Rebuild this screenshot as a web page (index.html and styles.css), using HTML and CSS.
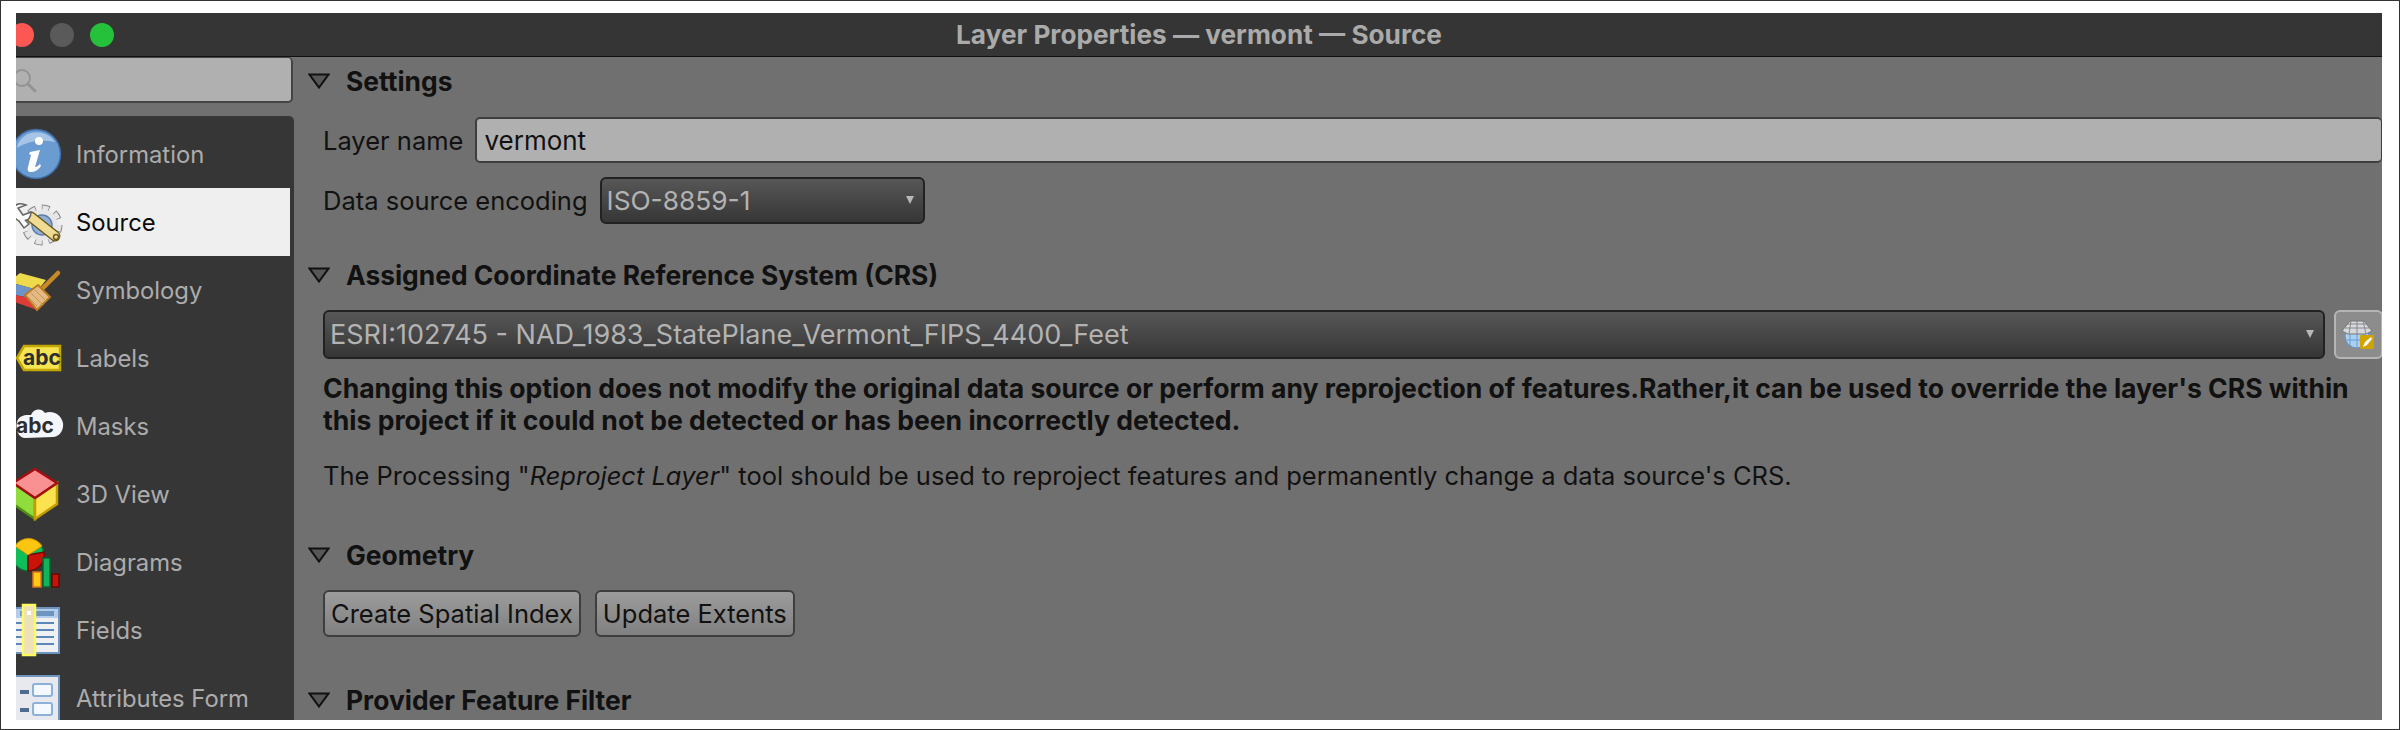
FILE: index.html
```html
<!DOCTYPE html>
<html lang="en">
<head>
    <meta charset="UTF-8">
    <title>Layer Properties — vermont — Source</title>
    <link rel="stylesheet" href="styles.css">
</head>
<body>
    <div class="window">
        <div class="titlebar">
            <div class="lights">
                <span class="light red"></span>
                <span class="light grey"></span>
                <span class="light green"></span>
            </div>
            <div class="title">Layer Properties — vermont — Source</div>
        </div>
        <div class="content">
            <div class="sidebar">
                <div class="search">
                    <svg class="search-icon" width="24" height="28" viewBox="0 0 24 28">
                        <circle cx="9" cy="12" r="8" fill="none" stroke="#939393" stroke-width="2"/>
                        <path d="M15 18l7 7" stroke="#939393" stroke-width="3" stroke-linecap="round"/>
                    </svg>
                </div>
                <div class="list">
                    <div class="item">
                        <svg class="icon" viewBox="0 0 56 52">
                            <circle cx="27" cy="26" r="24.500" fill="#6a9bd1" stroke="#3f6da8" stroke-width="1.500"/>
                            <path d="M8 20a20 17 0 0 1 38 -6a40 30 0 0 0 -38 6z" fill="#a5c4e6"/>
                            <circle cx="30" cy="13" r="4" fill="#fff"/>
                            <path d="M21 24l10-2-5 17c2 0 3-1 5-3l1 2c-3 4-6 6-10 6-3 0-4-2-3-5l3-12-2-1z" fill="#fff"/>
                        </svg>
                        <span>Information</span>
                    </div>
                    <div class="item active">
                        <svg class="icon" viewBox="0 0 56 52">
                            <circle cx="33" cy="29" r="17" fill="none" stroke="#888" stroke-width="7" stroke-dasharray="7.500 5.850" stroke-dashoffset="0.750"/>
                            <circle cx="33" cy="29" r="17" fill="none" stroke="#e6e6e6" stroke-width="5" stroke-dasharray="6 7.350"/>
                            <circle cx="33" cy="29" r="15.500" fill="#e6e6e6"/>
                            <circle cx="33" cy="29" r="10" fill="#8fb1d9" stroke="#5f7fa8" stroke-width="1.500"/>
                            <path d="M22 21l24 19" stroke="#6b5a20" stroke-width="11" stroke-linecap="round"/>
                            <path d="M22 21l24 19" stroke="#efdc92" stroke-width="8" stroke-linecap="round"/>
                            <circle cx="47" cy="41" r="2.500" fill="none" stroke="#6b5a20" stroke-width="1.500"/>
                            <path d="M5 12c2-5 7-5 12-3l-8 3 5 7 8-3c0 5-3 9-6 8l4 4-5 4-5-7c-5-3-7-8-5-13z" fill="#fafafa" stroke="#666" stroke-width="1.500"/>
                        </svg>
                        <span>Source</span>
                    </div>
                    <div class="item">
                        <svg class="icon" viewBox="0 0 56 52">
                            <path d="M0 18l11-9 26 7-8 10z" fill="#eedb4c"/>
                            <path d="M0 18l29 8-7 8-22-4z" fill="#6d94c9"/>
                            <path d="M0 30l22 4 6 12-28-10z" fill="#dd3b35"/>
                            <path d="M49 9l-20 20" stroke="#c98a2a" stroke-width="4.500" stroke-linecap="round"/>
                            <path d="M29 21l12 12-13 13-12-15z" fill="#e3bb82" stroke="#b97a23" stroke-width="2"/>
                            <path d="M22 29l12 12M26 26l11 11M19 33l9 9" stroke="#c6955b" stroke-width="1"/>
                        </svg>
                        <span>Symbology</span>
                    </div>
                    <div class="item">
                        <svg class="icon" viewBox="0 0 56 52">
                            <path d="M15 14h36v24h-36l-7-12z" fill="#f6e552" stroke="#c4a700" stroke-width="2.500"/>
                            <text class="icon-text" x="14" y="33">abc</text>
                        </svg>
                        <span>Labels</span>
                    </div>
                    <div class="item">
                        <svg class="icon" viewBox="0 0 56 52">
                            <path d="M8 22c2-7 8-7 14-7 2-6 10-8 14-2 6-3 16 0 18 10 1 8-4 14-10 14l-28 1c-6 0-10-8-8-16z" fill="#f4f6fc"/>
                            <text class="icon-text" x="7" y="33">abc</text>
                        </svg>
                        <span>Masks</span>
                    </div>
                    <div class="item">
                        <svg class="icon" viewBox="0 0 56 52">
                            <path d="M4 15l22 15v21l-22-15z" fill="#8fdc3c" stroke="#4d8f10" stroke-width="2.500"/>
                            <path d="M48 15l-22 15v21l22-15z" fill="#fde24f" stroke="#c49b00" stroke-width="2.500"/>
                            <path d="M26 1l22 14-22 15-22-15z" fill="#f99092" stroke="#a30f10" stroke-width="2.500"/>
                        </svg>
                        <span>3D View</span>
                    </div>
                    <div class="item">
                        <svg class="icon" viewBox="0 0 56 52">
                            <circle cx="19" cy="19" r="16" fill="#0fbd59" stroke="#0b6b34" stroke-width="1.500"/>
                            <path d="M19 19l16-3a16 16 0 0 1-16 19z" fill="#c91308" stroke="#6d0a05" stroke-width="1.500"/>
                            <path d="M19 19l-13-9a16 16 0 0 1 27 0z" fill="#fbc511" stroke="#e89100" stroke-width="1"/>
                            <rect x="24" y="36" width="8" height="15" fill="#fdc915" stroke="#e0701d" stroke-width="1.500"/>
                            <rect x="34" y="22" width="7" height="29" fill="#11b35b" stroke="#0b5f31" stroke-width="1.500"/>
                            <rect x="43" y="38" width="7" height="13" fill="#c91308" stroke="#660905" stroke-width="1.500"/>
                        </svg>
                        <span>Diagrams</span>
                    </div>
                    <div class="item">
                        <svg class="icon" viewBox="0 0 56 52">
                            <rect x="0" y="4" width="50" height="45" fill="#eef0f4" stroke="#6e94c0" stroke-width="2"/>
                            <rect x="1" y="5" width="48" height="9" fill="#b4cdea"/>
                            <rect x="11" y="7" width="34" height="5" fill="#6e94c0"/>
                            <path d="M27 19h18M27 26h18M27 33h18M27 40h18M0 19h13M0 26h13M0 33h13M0 40h13" stroke="#5b86ba" stroke-width="2"/>
                            <rect x="14" y="1" width="12" height="50" fill="#ece1b8" stroke="#fdfb62" stroke-width="2.500"/>
                            <rect x="18" y="7" width="4" height="4" fill="#fff"/>
                        </svg>
                        <span>Fields</span>
                    </div>
                    <div class="item">
                        <svg class="icon" viewBox="0 0 56 52">
                            <rect x="0" y="4" width="50" height="52" fill="#e7e9ee" stroke="#6e94c0" stroke-width="2"/>
                            <rect x="11" y="18" width="9" height="4" fill="#4f6d90"/>
                            <rect x="11" y="36" width="9" height="4" fill="#4f6d90"/>
                            <rect x="24" y="12" width="19" height="12" rx="2" fill="#f4f9ff" stroke="#8cb0d8" stroke-width="2"/>
                            <rect x="24" y="31" width="19" height="12" rx="2" fill="#f4f9ff" stroke="#8cb0d8" stroke-width="2"/>
                        </svg>
                        <span>Attributes Form</span>
                    </div>
                </div>
            </div>

            <div class="main">
                <div class="section-head">
                    <svg class="arrow" viewBox="0 0 22 16"><path d="M1.500 1.500h19l-9.500 13z" fill="#575757" stroke="#111" stroke-width="2"/></svg>
                    Settings
                </div>
                <div class="form-row name-row">
                    <label>Layer name</label>
                    <div class="text-input">vermont</div>
                </div>
                <div class="form-row encoding-row">
                    <label>Data source encoding</label>
                    <div class="combo encoding">ISO-8859-1<span class="combo-arrow"></span></div>
                </div>

                <div class="section-head crs-head">
                    <svg class="arrow" viewBox="0 0 22 16"><path d="M1.500 1.500h19l-9.500 13z" fill="#575757" stroke="#111" stroke-width="2"/></svg>
                    Assigned Coordinate Reference System (CRS)
                </div>
                <div class="crs-row">
                    <div class="combo crs">ESRI:102745 - NAD_1983_StatePlane_Vermont_FIPS_4400_Feet<span class="combo-arrow"></span></div>
                    <div class="crs-button">
                        <svg width="34" height="30" viewBox="0 0 34 30">
                            <circle cx="15" cy="16" r="12" fill="#a9d0f2" stroke="#5e92c8" stroke-width="1"/>
                            <path d="M3 20h24M15 4v24M8 6v20M22 6v20" stroke="#5e92c8" stroke-width="0.800" fill="none"/>
                            <path d="M0 11l8-10h14l8 10-6 3h-18z" fill="#d5d9de" stroke="#777" stroke-width="1"/>
                            <path d="M9 1l-2 13M21 1l3 13M15 1v13M3 8h24M6 4h18" stroke="#777" stroke-width="0.800"/>
                            <rect x="18" y="15" width="14" height="14" rx="1" fill="#cfa400"/>
                            <path d="M21 27l2-5 6-5 1 2-5 6z" fill="#fff"/>
                        </svg>
                    </div>
                </div>
                <p class="warning">Changing this option does not modify the original data source or perform any reprojection of features.Rather,it can be used to override the layer's CRS within this project if it could not be detected or has been incorrectly detected.</p>
                <p class="note">The Processing "<em>Reproject Layer</em>" tool should be used to reproject features and permanently change a data source's CRS.</p>

                <div class="section-head geometry-head">
                    <svg class="arrow" viewBox="0 0 22 16"><path d="M1.500 1.500h19l-9.500 13z" fill="#575757" stroke="#111" stroke-width="2"/></svg>
                    Geometry
                </div>
                <div class="buttons">
                    <button>Create Spatial Index</button>
                    <button>Update Extents</button>
                </div>

                <div class="section-head filter-head">
                    <svg class="arrow" viewBox="0 0 22 16"><path d="M1.500 1.500h19l-9.500 13z" fill="#575757" stroke="#111" stroke-width="2"/></svg>
                    Provider Feature Filter
                </div>
            </div>
        </div>
    </div>
</body>
</html>
```

FILE: styles.css
```css
* {
    box-sizing: border-box;
}

html, body {
    height: 100%;
}

body {
    margin: 0;
    padding: 12px 17px 9px 15px;
    background-color: #fff;
    border: 1px solid #333;
    font-family: Inter, "Noto Sans", sans-serif;
    font-size: 25.500px;
    color: #111;
    overflow: hidden;
}

.window {
    height: 100%;
    display: flex;
    flex-direction: column;
    overflow: hidden;
    background-color: #707070;
}

.titlebar {
    height: 44px;
    flex-shrink: 0;
    display: grid;
    grid-template-columns: 1fr auto 1fr;
    align-items: center;
    background-color: #353535;
    border-bottom: 1px solid #111;
}

.lights {
    display: flex;
    gap: 16px;
    margin-left: -6px;
}

.light {
    width: 24px;
    height: 24px;
    border-radius: 50%;
}

.red { background-color: #fc5753; }
.grey { background-color: #5a5a5a; }
.green { background-color: #26c13b; }

.title {
    font-size: 26.200px;
    font-weight: 700;
    color: #aaa;
}

.content {
    flex: 1;
    display: flex;
    min-height: 0;
}

.sidebar {
    width: 278px;
    flex-shrink: 0;
    display: flex;
    flex-direction: column;
}

.search {
    height: 46px;
    width: 277px;
    margin-bottom: 13px;
    flex-shrink: 0;
    display: flex;
    align-items: center;
    background-color: #b0b0b0;
    border: solid #444;
    border-width: 1px 2px 2px 0;
    border-radius: 0 5px 5px 0;
}

.search-icon {
    margin-left: -3px;
}

.list {
    flex: 1;
    padding: 4px 4px 0 0;
    background-color: #363636;
    border-radius: 0 5px 0 0;
    overflow: hidden;
}

.item {
    height: 68px;
    flex-shrink: 0;
    display: flex;
    align-items: center;
    overflow: hidden;
    font-size: 23.800px;
    color: #acacac;
}

.item.active {
    background-color: #efefef;
    color: #0c0c0c;
}

.icon {
    width: 56px;
    height: 52px;
    margin-left: -7px;
    margin-right: 11px;
    flex-shrink: 0;
    overflow: visible;
}

.icon-text {
    font-family: Inter, sans-serif;
    font-size: 21px;
    font-weight: 700;
    fill: #2e2e2e;
}

.main {
    flex: 1;
    min-width: 0;
    overflow: hidden;
    padding: 5px 0 0 14px;
}

.section-head {
    display: flex;
    align-items: center;
    height: 38px;
    font-size: 26.400px;
    font-weight: 700;
    color: #111;
}

.arrow {
    width: 22px;
    height: 16px;
    margin-right: 16px;
    flex-shrink: 0;
}

.form-row {
    display: flex;
    align-items: center;
    margin-left: 15px;
}

.form-row label {
    margin-right: 12px;
}

.name-row {
    height: 46px;
    margin-top: 17px;
}

.encoding-row {
    height: 47px;
    margin-top: 14px;
}

.text-input {
    flex: 1;
    height: 46px;
    display: flex;
    align-items: center;
    padding-left: 7px;
    background-color: #b0b0b0;
    border: 2px solid #3e3e3e;
    border-right-width: 1px;
    border-radius: 5px;
    font-size: 26px;
}

.combo {
    position: relative;
    display: flex;
    align-items: center;
    padding-left: 5px;
    background: linear-gradient(#575757, #363636);
    border: 2px solid #222;
    border-radius: 6px;
    color: #b3b3b3;
}

.encoding {
    width: 325px;
    height: 47px;
    font-size: 26.300px;
}

.combo-arrow {
    position: absolute;
    right: 9px;
    top: 50%;
    margin-top: -5px;
    width: 0;
    height: 0;
    border-left: 4px solid transparent;
    border-right: 4px solid transparent;
    border-top: 8px solid #b8b8b8;
}

.crs-head {
    margin-top: 32px;
}

.crs-row {
    display: flex;
    gap: 9px;
    margin-top: 16px;
    margin-left: 15px;
}

.crs {
    flex: 1;
    height: 49px;
    font-size: 27px;
}

.crs-button {
    width: 49px;
    height: 49px;
    margin-right: -1px;
    display: flex;
    align-items: center;
    justify-content: center;
    background-color: #8c8c8c;
    border: 2px solid #b5b5b5;
    border-radius: 6px;
}

.warning {
    margin: 13px 0 0 15px;
    font-size: 26.550px;
    font-weight: 700;
    line-height: 32px;
}

.note {
    margin: 24px 0 0 15px;
    line-height: 32px;
}

.geometry-head {
    margin-top: 44px;
}

.buttons {
    display: flex;
    gap: 14px;
    margin-top: 16px;
    margin-left: 15px;
}

button {
    height: 47px;
    padding: 0 6px;
    background: linear-gradient(#9c9c9c, #808080);
    border: 2px solid #3e3e3e;
    border-radius: 6px;
    font-family: inherit;
    font-size: 25.500px;
    color: #111;
}

.filter-head {
    margin-top: 44px;
}
```
